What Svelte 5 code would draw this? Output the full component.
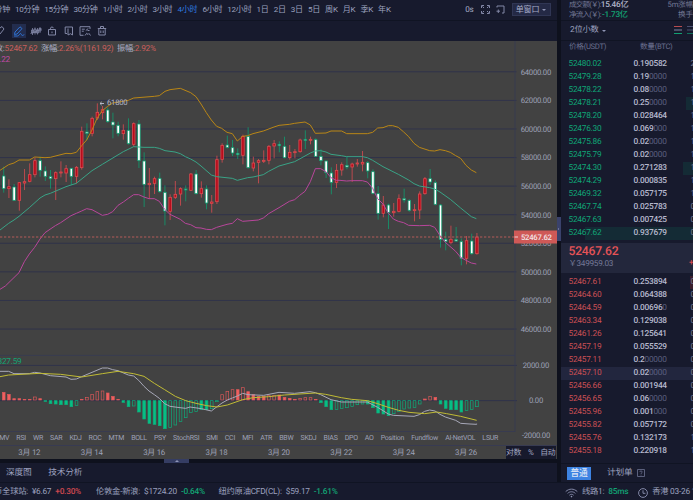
<script>
    const periods = ["10分钟", "15分钟", "30分钟", "1小时", "2小时", "3小时", "4小时", "6小时", "12小时", "1日", "2日", "3日", "5日", "周K", "月K", "季K", "年K"];
    let period = $state("4小时");

    const indicators = ["MV", "RSI", "WR", "SAR", "KDJ", "ROC", "MTM", "BOLL", "PSY", "StochRSI", "SMI", "CCI", "MFI", "ATR", "BBW", "SKDJ", "BIAS", "DPO", "AO", "Position", "Fundflow", "AI-NetVOL", "LSUR"];
    const dates = ["3月 12", "3月 14", "3月 16", "3月 18", "3月 20", "3月 22", "3月 24", "3月 26"];
    const prices = [64000, 62000, 60000, 58000, 56000, 54000, 52000, 50000, 48000, 46000];

    // price, amount, trailing zeros, total, depth bar width
    const bids = [
        ["52480.02", "0.190582", "", "2", 0],
        ["52479.28", "0.19", "0000", "1", 0],
        ["52478.22", "0.08", "0000", "1", 0],
        ["52478.21", "0.25", "0000", "1", 7],
        ["52478.20", "0.028464", "", "1", 0],
        ["52476.30", "0.069", "000", "1", 0],
        ["52475.86", "0.02", "0000", "1", 0],
        ["52475.79", "0.02", "0000", "1", 0],
        ["52474.30", "0.271283", "", "1", 10],
        ["52474.29", "0.000835", "", "1", 0],
        ["52469.32", "0.057175", "", "1", 0],
        ["52467.74", "0.025783", "", "0", 0],
        ["52467.63", "0.007425", "", "0", 0],
        ["52467.62", "0.937679", "", "0", 108],
    ];
    const asks = [
        ["52467.61", "0.253894", "", "0", 3],
        ["52464.60", "0.064388", "", "0", 0],
        ["52464.59", "0.00696", "0", "0", 0],
        ["52463.34", "0.129038", "", "0", 0],
        ["52461.26", "0.125641", "", "0", 0],
        ["52457.19", "0.055529", "", "0", 0],
        ["52457.11", "0.2", "00000", "0", 0],
        ["52457.10", "0.02", "0000", "0", 0],
        ["52456.66", "0.001944", "", "0", 0],
        ["52456.65", "0.06", "0000", "0", 0],
        ["52455.96", "0.001", "000", "0", 0],
        ["52455.82", "0.057172", "", "0", 0],
        ["52455.76", "0.132173", "", "1", 0],
        ["52455.18", "0.220918", "", "1", 0],
    ];

    // all series are in thirds of a pixel; each block has its own origin
    const STEP = 15.6;
    const barX = i => 11.2 + i * STEP;

    // direction, high, body top, body bottom, low
    const candleBlocks = [
        [180, `g 320 347 387 398,r 358 379 387 414,g 372 380 422 422,r 366 367 422 452,r 327 364 370 390,r 310 343 365 367,r 292 301 345 352,g 290 301 332 350,g 319 332 350 363,g 330 349 357 386,r 334 337 357 420,r 304 335 340 352,r 315 325 340 366,g 324 324 350 375,r 318 321 350 370,r 200 213 324 329,g 190 215 221 240,r 170 174 221 229,r 130 156 175 180,r 138 148 159 178,g 142 149 186 188,g 158 185 196 235,g 185 195 221 229,r 193 210 222 239,g 175 210 252 254,r 187 190 254 260,g 180 191 303 324,g 277 302 374 441,r 324 369 375 416,r 350 355 371 402,g 338 354 396 398`],
        [240, `g 316 336 394 436,r 343 351 395 420,r 303 342 353 357,r 322 325 343 377,g 316 326 331 364,r 279 281 332 333,g 270 281 342 343,r 304 325 342 353,g 316 326 370 388,r 345 365 371 398,r 227 238 366 372,r 190 195 239 248,g 167 194 203 205,g 180 202 220 228,g 205 219 225 237,r 164 168 227 253,g 142 168 264 266,r 230 248 265 274,r 237 241 248 310,r 211 240 244 249,r 195 198 242 253,r 180 190 199 235,g 184 192 198 217,g 170 198 234 235,r 195 216 234 239,r 207 214 218 235,r 176 179 216 218,g 151 177 180 207,r 170 177 181 193,g 175 178 230 231,g 208 228 243 256,g 241 242 279 294`],
        [390, `g 112 128 158 193,r 102 120 158 174,r 97 103 121 137,g 80 105 112 118,r 98 101 112 156,r 87 98 102 110,r 63 96 103 124,g 93 97 124 145,g 118 124 191 193,g 168 190 251 269,r 198 224 251 262,g 221 224 248 297,r 219 243 249 260,r 193 205 245 247,g 176 205 211 218,g 208 210 242 245,r 222 238 242 274,r 184 191 241 267,r 141 145 192 194,g 117 145 157 165,g 151 157 224 226,g 222 224 329 353,g 305 327 335 361,r 287 327 339 343,g 291 328 334 336,g 325 334 386 406,r 318 331 386 403,g 311 332 372 374,r 309 320 372 374`],
    ];
    const candles = candleBlocks.flatMap(([dy, text]) =>
        text.split(",").map(row => {
            const [dir, ...v] = row.split(" ");
            const [high, top, bottom, low] = v.map(n => +n + dy);
            return { dir, high, top, bottom, low };
        })
    );

    const line = blocks => blocks.map(([dx, dy, text]) =>
        text.split(" ").map(p => {
            const [x, y] = p.split(",").map(Number);
            return `${x + dx},${y + dy}`;
        }).join(" ")
    ).join(" ");

    const upper = line([
        [0, 180, "0,331 26,314 42,309 57,300 88,300 104,291 135,293 151,292 198,280 213,281 229,277 245,257 260,240 276,210 291,175 307,152 323,139 338,129 385,121 401,114 463,109 478,107"],
        [480, 240, "15,34 30,29 61,25 92,38 108,50 123,72 139,98 154,120 170,139 185,145 201,157 217,161 232,183 248,169 263,167 279,161 310,153 342,141 357,136 388,133 404,130 435,126 451,135 466,160 498,159 513,153"],
        [990, 390, "35,3 50,11 112,11 128,7 143,-6 159,-7 175,-13 188,-13 205,-8 220,5 236,20 252,40 268,52 299,62 314,63 330,59 346,62 361,67 377,77 392,85 408,106 424,120 439,128"],
    ]);
    const middle = line([
        [0, 180, "0,510 26,490 42,480 57,469 88,443 120,414 135,405 151,400 198,380 229,370 276,332 307,313 370,275 401,260 432,262 463,262 478,265"],
        [480, 240, "15,212 45,216 61,221 76,230 92,237 108,246 123,258 154,285 170,290 217,295 232,301 263,293 279,291 310,284 326,274 357,258 404,245 435,228 451,219 466,213 482,212 498,216 513,223"],
        [990, 390, "34,77 50,80 97,80 112,83 128,91 159,110 205,133 236,150 252,161 268,168 299,173 314,177 330,186 361,208 392,234 424,260 439,266"],
    ]);
    const lower = line([
        [0, 180, "0,688 16,678 57,638 73,605 88,582 104,562 120,537 135,518 166,497 182,488 213,467 229,460 245,453 260,446 276,449 307,466 323,463 338,455 354,436 370,426 385,415 401,404 416,404 432,411 447,416 463,416 478,424"],
        [480, 240, "14,388 30,403 61,418 76,430 92,434 108,443 123,444 139,448 154,449 170,442 201,433 217,430 232,416 248,424 295,420 310,414 326,401 357,383 388,364 404,359 419,346 435,334 451,305 466,266 482,266 498,275 513,293 529,301"],
        [990, 390, "30,151 50,153 65,152 97,152 112,156 128,175 143,206 159,222 174,248 190,267 205,274 221,278 236,286 268,287 299,286 314,292 330,317 346,337 377,364 392,382 408,391 424,399 439,402"],
    ]);
    const dif = line([
        [0, 1035, "0,79 26,79 42,86 88,86 104,82 120,84 151,92 198,96 213,103 229,102 245,95 276,82 307,69 323,69 338,74 354,77 385,90 401,93 416,106 432,124 447,138 463,149 478,160 494,176 510,184 540,188 557,190 570,186 604,191 617,194 634,198 651,185 666,174 682,165 697,159"],
        [690, 1035, "22,153 38,145 54,149 101,151 147,142 194,145 240,140 256,143 272,149 303,164 334,171 412,171 443,187 475,207 490,211 552,214 568,209 584,199 599,195 615,198 630,208 646,216 677,226 692,235 720,237 740,238 740,236"],
    ]);
    const dea = line([
        [0, 1035, "0,95 26,90 120,85 182,88 245,96 307,86 354,79 401,86 432,94 463,115 494,134 526,154 557,167 588,175 620,182 651,186 682,180"],
        [690, 1035, "38,164 70,158 116,155 163,150 225,146 256,144 287,148 334,158 365,163 412,167 443,176 475,187 506,196 537,202 584,206 620,201 650,206 692,214 720,221 740,226"],
    ]);

    // histogram ends, "h" marks a hollow bar
    const ZERO = 166;
    const bars = "141 147 160 160 162 162 155h 160 169 177 178 180 180 186 182h 162 156h 147h 139h 137h 143 153 162 173 186 184h 202 223 236 239 243 252 248h 241h 230h 219h 203h 200h 195 195 192h 171h 148h 138h 133h 133 127h 139 148 153 153 151h 150h 149 156 159 162 159h 157h 157h 162 174 186 195 194h 191h 189h 185h 180h 178h 178 189 205 208 213 207h 200h 193h 190h 188h 178h 161 153h 156 178 191 195 195 202 197h 194h 186h"
        .split(" ")
        .map(s => ({ end: parseInt(s), hollow: s.endsWith("h") }));
</script>

{#snippet row(r, side, active)}
    <div class="row {side}" class:active>
        <i class="depth" style="width: {r[4]}px"></i>
        <span class="price">{r[0]}</span>
        <span class="amount">{r[1]}<em>{r[2]}</em></span>
        <span class="total">{r[3]}</span>
    </div>
{/snippet}

<div class="app">
    <div class="left">
        <nav class="periods">
            <span class="cut">5分钟</span>
            {#each periods as p}
                <button class:on={p === period} onclick={() => { period = p }}>{p}</button>
            {/each}
            <div class="window">
                <span>0s</span>
                <svg width="9" height="9" viewBox="0 0 9 9"><path d="M.5 3V.5H3M6 .5h2.500V3M8.500 6v2.500H6M3 8.500H.5V6M1.500 1.500 3 3M7.500 1.500 6 3M1.500 7.500 3 6M7.500 7.500 6 6" /></svg>
                <svg width="9" height="9" viewBox="0 0 9 9"><path d="M1 2.500V1h7v7H6M.5 6.200h3.500M2.300 4.500v3.500" /></svg>
                <button class="single">单窗口 <i class="caret"></i></button>
            </div>
        </nav>

        <div class="tools">
            <svg class="pen" width="6" height="12" viewBox="0 0 6 12"><path d="M0 3 2 1.500 4 4 0 9" /></svg>
            <span class="tool on">
                <svg width="12" height="12" viewBox="0 0 12 12"><path d="M1.500 9.500 2 7l5-5.200 2 1.800-5 5.400zM1 11h3.500c1.500 0 2-2.500 3-2.500s.8 2 1.800 2 1-.8 2-.8" /></svg>
            </span>
            <svg class="strike" width="12" height="12" viewBox="0 0 12 12"><path d="M2.500 3v7M5 2.500v7M7.500 3v6.500M10 2v6M1.500 5h2v3h-2zM4 4h2v3.500H4zM6.500 5h2v3h-2zM9 3.500h2V6H9zM.5 8.500 11.500 4" /></svg>
            <svg class="lock" width="10" height="12" viewBox="0 0 10 12"><path d="M1.500 4.500h7v5.500h-7zM3.500 4.500V3.200c0-1.600 2.800-1.600 3 0M5 6.500v1.700" /></svg>
            <svg class="copy" width="10" height="12" viewBox="0 0 10 12"><path d="M3 2h5.500v8l-2-1.300L4 10V3.500M3 2H1.200v6.500H3" /></svg>
            <svg class="picture" width="12" height="12" viewBox="0 0 12 12"><path d="M11 4V1.700H1v8.600h3.500M2.800 4.200h3M2.800 6.200h2M6 10.500l1.700-2.200 1.300 1.200 1-1 1.500 2M6.800 5.500l2.500-2M8.500 5.500h2" /></svg>
            <svg class="trash" width="10" height="12" viewBox="0 0 10 12"><path d="M.8 3.500h8.400M3.500 3.500v-2h3v2M1.800 3.500V10h6.400V3.500M3.800 5.500v2.500M6.200 5.500v2.500" /></svg>
        </div>

        <div class="chart">
            <svg class="plot" width="557" height="391" viewBox="0 41 557 391">
                {#each prices as p, i}
                    <path class="grid" d="M0 {71.8 + i * 28.58}H516.500" />
                    <text class="axis" x="551" y={74.6 + i * 28.58}>{p}.00</text>
                {/each}
                <path class="grid faint" d="M0 355.400H515M0 431.500H515" />
                <path class="grid" d="M0 365.400H517M0 400.600H517" />
                <path class="grid faint" d="M515 41V432" />
                <text class="axis" x="549" y="368.200">2000.00</text>
                <text class="axis" x="543" y="403.200">0.00</text>

                <g transform="scale({1 / 3})">
                    {#each candles as c, i}
                        <g class={c.dir}>
                            <path class="wick" d="M{barX(i)} {c.high}V{c.low}" />
                            <rect x={barX(i) - 3.8} y={c.top + 1} width="7.600" height={Math.max(c.bottom - c.top - 2, 3)} />
                        </g>
                    {/each}
                    {#each bars as b, i}
                        <rect
                            class="bar"
                            class:up={b.end < ZERO}
                            class:hollow={b.hollow}
                            x={barX(i) - 4}
                            y={1035 + Math.min(b.end, ZERO) + 1}
                            width="8"
                            height={Math.max(Math.abs(b.end - ZERO) - 2, 2)}
                        />
                    {/each}
                    <polyline class="upper" points={upper} />
                    <polyline class="middle" points={middle} />
                    <polyline class="lower" points={lower} />
                    <polyline class="dif" points={dif} />
                    <polyline class="dea" points={dea} />
                </g>

                <path class="arrow" d="M104 103.500h-4m1.700-1.600L100 103.500l1.700 1.600" />
                <text class="peak" x="107" y="105.400">61800</text>

                <path class="now" d="M0 237H514" />
                <rect class="tag" x="514" y="230.500" width="43" height="13" />
                <path class="tick" d="M514.500 237h3.500" />
                <text class="tag-text" x="521" y="239.900">52467.62</text>

                <text class="info" x="4.600" y="50.500" text-anchor="end">收:</text>
                <text class="info hot" x="4.600" y="50.500">52467.62</text>
                <text class="info" x="41" y="50.500">涨幅:<tspan class="hot">2.26%(1161.92)</tspan></text>
                <text class="info" x="117" y="50.500">振幅:<tspan class="hot">2.92%</tspan></text>
                <text class="info pink" x="10" y="62" text-anchor="end">51037.22</text>
                <text class="info mint" x="21.500" y="364.200" text-anchor="end">-827.59</text>
            </svg>
            <div class="indicators">
                {#each indicators as name}
                    <span>{name}</span>
                {/each}
                <b>-2000.00</b>
            </div>
            <div class="dates">
                {#each dates as d}
                    <span>{d}</span>
                {/each}
                <div class="scale"><span>对数</span><span>%</span><span>自动</span></div>
            </div>
        </div>

        <div class="splitter"><i></i></div>
        <div class="tabs"><span>深度图</span><span>技术分析</span></div>
    </div>

    <div class="gutter"><i></i></div>

    <div class="right">
        <div class="stats">
            <div><span>成交额(￥):</span><b>15.46亿</b><u>5m涨幅</u></div>
            <div><span>净流入(￥):</span><b class="mint">-1.73亿</b><u class="turn">换手</u></div>
        </div>
        <div class="precision">
            <span>2位小数</span><i class="caret"></i>
            <svg width="19" height="10" viewBox="0 0 19 10">
                <path stroke="#b64c50" d="M0 1.500h8" /><path stroke="#8085a3" d="M0 5h8" /><path stroke="#10a071" d="M0 8.500h8" />
                <path stroke="#4a5070" d="M13 1.500h8M13 5h8" /><path stroke="#10705b" d="M13 8.500h8" />
            </svg>
        </div>
        <div class="head"><span>价格(USDT)</span><span>数量(BTC)</span></div>
        <div class="book bids">
            {#each bids as r}
                {@render row(r, "bid", false)}
            {/each}
        </div>
        <div class="last">
            <strong>52467.62</strong>
            <small>￥349959.03</small>
            <b>+</b>
        </div>
        <div class="book asks">
            {#each asks as r, i}
                {@render row(r, "ask", i === 7)}
            {/each}
        </div>
        <div class="orders">
            <button>普通</button><span>计划单</span>
            <svg width="8" height="8" viewBox="0 0 8 8"><path d="M.5.5h7v7h-7zM2.800 3c0-1.500 2.400-1.500 2.400 0C5.200 4 4 3.800 4 5M4 5.700v.8" /></svg>
        </div>
    </div>

    <footer>
        <div class="quote q1"><span>币全球站:</span><span>¥6.67</span><b class="red">+0.30%</b></div>
        <div class="quote q2"><span>伦敦金-新浪:</span><span>$1724.20</span><b class="mint">-0.64%</b></div>
        <div class="quote q3"><span>纽约原油CFD(CL):</span><span>$59.17</span><b class="mint">-1.61%</b></div>
        <div class="net">
            <svg width="13" height="10" viewBox="0 0 13 10"><path d="M.7 3.600c3.300-3.300 8.300-3.300 11.600 0M2.600 5.400c2.200-2.200 5.600-2.200 7.800 0M4.400 7.200c1.200-1.200 3-1.200 4.200 0" /><circle cx="6.500" cy="8.600" r=".8" /></svg>
            <span>线路1:</span><b class="mint">85ms</b>
            <svg class="clock" width="10" height="10" viewBox="0 0 10 10"><circle class="ring" cx="5" cy="5" r="4.400" /><path d="M5 2.300V5.300h2.400" /></svg>
            <span>香港 03-26 15:32</span>
        </div>
    </footer>
</div>

<style>
    :global(body) {
        background: #0e111d;
    }

    .app {
        display: grid;
        grid-template-columns: 557px 4px 132px;
        grid-template-rows: 482px 18px;
        width: 693px;
        height: 500px;
        overflow: hidden;
        font: 8.3px/1 Roboto, "Noto Sans CJK SC", sans-serif;
        letter-spacing: -.25px;
        text-rendering: geometricPrecision;
        color: #9ca1bf;
        white-space: nowrap;
        cursor: default;
    }

    button {
        border: none;
        background: none;
        margin: 0;
        padding: 0;
        font: inherit;
        letter-spacing: inherit;
        color: inherit;
    }

    b {
        font-weight: 500;
    }

    svg {
        display: block;
        flex: none;
        fill: none;
        stroke: #8287a6;
        stroke-width: 1;
    }

    text {
        stroke: none;
    }

    .red {
        color: #d0484f;
    }

    .mint {
        color: #12a374;
        fill: #12a374;
    }

    .caret {
        display: inline-block;
        border: 2px solid transparent;
        border-top-color: #9095b5;
        border-bottom: none;
    }

    .left {
        display: flex;
        flex-direction: column;
        min-width: 0;
        overflow: hidden;
    }

    .periods {
        box-sizing: border-box;
        display: flex;
        align-items: center;
        gap: 5.1px;
        height: 21px;
        padding-bottom: 1px;
        border-bottom: 1px solid #101423;
        background: #171a2d;
        font-size: 8.100px;
        letter-spacing: -.3px;

        .cut {
            width: 10px;
            display: flex;
            justify-content: flex-end;
        }

        .on {
            color: #2f7be0;
        }
    }

    .window {
        display: flex;
        align-items: center;
        margin-left: auto;
        padding-right: 6.500px;

        span {
            color: #a9adc6;
            margin-right: 7px;
        }

        svg {
            margin-right: 6.500px;
        }
    }

    .single {
        display: flex;
        align-items: center;
        justify-content: center;
        gap: 3px;
        box-sizing: border-box;
        width: 39px;
        height: 13px;
        border: 1px solid #303654;
        background: #242945;
        color: #a4a9c6;
    }

    .tools {
        display: flex;
        align-items: center;
        height: 20px;
        background: #171a2d;
    }

    .tool {
        display: flex;
        align-items: center;
        justify-content: center;
        width: 14px;
        height: 14px;
        margin-left: 6px;
        background: #232d4e;

        svg {
            stroke: #2f72d2;
        }
    }

    .strike {
        margin-left: 4px;
        stroke-width: .8;
    }

    .lock {
        margin-left: 5px;
    }

    .copy {
        margin-left: 7px;
    }

    .picture {
        margin-left: 5px;
    }

    .trash {
        margin-left: 6px;
    }

    .chart {
        height: 418px;
        background: #424242;
    }

    .grid {
        stroke: #30334a;
    }

    .faint {
        stroke: #363a54;
        stroke-width: .8;
    }

    .axis {
        fill: #9ea1b7;
        font-size: 7.700px;
        text-anchor: end;
    }

    .peak {
        fill: #b3b5c6;
        font-size: 7.700px;
    }

    .arrow {
        stroke: #c0c2d2;
        stroke-width: .9;
    }

    .info {
        fill: #b0b3c8;
        font-size: 8.300px;

        &.hot, .hot {
            fill: #c95f5d;
        }

        &.pink {
            fill: #bf4aa4;
        }

        &.mint {
            fill: #12a374;
        }
    }

    .now {
        stroke: #b35b58;
        stroke-width: 1.200;
        stroke-dasharray: 2.300 1.700;
    }

    .tag {
        fill: #cf5957;
        stroke: none;
    }

    .tick {
        stroke: #ecd0d3;
    }

    .tag-text {
        fill: #f3e6e8;
        font-size: 7.700px;
        font-weight: 500;
    }

    .r {
        stroke: #d94b50;
        fill: #b80c1c;
    }

    .g {
        stroke: #0f9d70;
        fill: #fff;
    }

    .r > *, .g > * {
        stroke-width: 2.400;
    }

    .bar {
        fill: #06bf85;
        stroke: #0cae7b;
        stroke-width: 2;

        &.up {
            fill: #f06060;
            stroke: #dc5859;
        }

        &.hollow {
            fill: none;
        }
    }

    polyline {
        stroke-width: 3;
        stroke-linejoin: round;
    }

    .upper {
        stroke: #b98616;
    }

    .middle {
        stroke: #39a386;
    }

    .lower {
        stroke: #b8469b;
    }

    .dif {
        stroke: #a7a8b8;
    }

    .dea {
        stroke: #c0bb35;
    }

    .indicators {
        display: flex;
        align-items: center;
        gap: 7.050px;
        height: 13px;
        margin-left: -.8px;
        font-size: 7px;
        color: #9ea1b7;

        b {
            margin: -6px 0 0 auto;
            padding-right: 7px;
            font-size: 7.700px;
            font-weight: 400;
        }
    }

    .dates {
        box-sizing: border-box;
        display: flex;
        align-items: center;
        height: 14px;
        border-top: 1px solid #383b52;
        font-size: 7.900px;
        color: #9ea1b7;

        > span {
            flex: none;
            width: 62.400px;
            text-align: center;
        }

        > span:first-child {
            margin-left: -1.900px;
        }
    }

    .scale {
        box-sizing: border-box;
        display: flex;
        align-items: center;
        justify-content: space-between;
        width: 50px;
        height: 13px;
        margin-left: 8.700px;
        padding-right: .5px;
        background: #17192c;
        color: #a4a8c1;
    }

    .splitter {
        display: flex;
        height: 4px;
        background: #0e111d;

        i {
            display: flex;
            justify-content: center;
            align-items: center;
            width: 25px;
            margin-left: 164px;
            background: #353d63;
        }

        i::after {
            content: "";
            border: 2px solid transparent;
            border-bottom-color: #8f95b8;
            border-top: none;
        }
    }

    .tabs {
        box-sizing: border-box;
        display: flex;
        align-items: center;
        gap: 17px;
        height: 19px;
        padding: 2px 0 0 6px;
        background: #171a2d;
        font-size: 8.700px;
    }

    .gutter {
        background: #0e111d;

        i {
            display: flex;
            align-items: center;
            height: 24px;
            margin-top: 217px;
            background: #3a426c;
        }

        i::after {
            content: "";
            margin-left: 1px;
            border: 1.500px solid transparent;
            border-left-color: #9ba0c0;
            border-right: none;
        }
    }

    .right {
        display: flex;
        flex-direction: column;
        min-width: 0;
        overflow: hidden;
        background: #171a2d;
    }

    .stats {
        box-sizing: border-box;
        height: 21px;
        border-bottom: 1px solid #101423;

        div {
            display: flex;
            align-items: center;
            height: 10px;
            padding-left: 8px;
            color: #737896;
            font-size: 7.700px;
        }

        span {
            width: 33.500px;
            font-size: 7.500px;
            letter-spacing: -.75px;
        }

        b {
            width: 72.500px;
            font-size: 8.200px;
            color: #b3b6cc;
        }

        .mint {
            color: #12a374;
        }

        u {
            text-decoration: none;
        }

        .turn {
            padding-left: 4.500px;
        }
    }

    .precision {
        box-sizing: border-box;
        display: flex;
        align-items: center;
        height: 20px;
        padding-left: 9px;
        border-bottom: 1px solid #101423;

        .caret {
            margin: 1px 0 0 3px;
        }

        svg {
            margin: -2px 0 0 auto;
        }
    }

    .head {
        display: flex;
        height: 16.500px;
        padding: 1.500px 0 0 8px;
        box-sizing: border-box;
        font-size: 7.700px;
        letter-spacing: -.35px;
        color: #6a6f8e;

        span:first-child {
            width: 71px;
        }
    }

    .row {
        position: relative;
        display: flex;
        align-items: center;
        height: 13px;
        padding-left: 7.500px;

        &.active {
            background: #22263e;
        }
    }

    .depth {
        position: absolute;
        top: 0;
        right: 0;
        height: 100%;
    }

    .bid {
        .price {
            color: #10a476;
        }

        .depth {
            background: #142b35;
        }
    }

    .ask {
        .price {
            color: #c94f54;
        }

        .depth {
            background: #3a1f2e;
        }
    }

    .price, .amount, .total {
        position: relative;
        flex: none;
    }

    .price {
        width: 65px;
    }

    .amount {
        width: 57px;
        color: #b6b9cd;
        font-weight: 500;

        em {
            font-style: normal;
            font-weight: 400;
            color: #5a5f7e;
        }
    }

    .total {
        color: #70758f;
    }

    .last {
        position: relative;
        display: flex;
        flex-direction: column;
        box-sizing: border-box;
        height: 29.500px;
        margin-top: 3.500px;
        padding: 2px 0 0 7.500px;
        background: #23273c;

        strong {
            font-size: 12.200px;
            font-weight: 500;
            color: #e65357;
        }

        small {
            margin-top: 3px;
            font-size: 8.200px;
            color: #747997;
        }

        b {
            position: absolute;
            left: 128px;
            top: 16px;
            color: #d0484f;
        }
    }

    .asks {
        padding-top: 3.500px;
    }

    .orders {
        box-sizing: border-box;
        display: flex;
        align-items: center;
        margin-top: auto;
        height: 19px;
        padding-left: 6px;
        border-top: 1px solid #101423;
        font-size: 8.700px;

        button {
            width: 24px;
            height: 13px;
            background: #3d83e2;
            color: #dfe6f6;
            font-weight: 500;
        }

        span {
            margin: 0 4.500px 0 16px;
        }

        svg {
            stroke: #6d7291;
            stroke-width: .8;
        }
    }

    footer {
        grid-column: 1 / -1;
        box-sizing: border-box;
        display: flex;
        align-items: center;
        padding-top: 2px;
        border-top: 1px solid #101423;
        background: #171a2d;
    }

    .quote {
        flex: none;
        display: flex;
        gap: 4px;
    }

    .q1 {
        width: 96px;

        span:first-child {
            display: flex;
            justify-content: flex-end;
            width: 28px;
        }
    }

    .q2 {
        width: 122.500px;
    }

    .net {
        display: flex;
        align-items: center;
        margin-left: auto;
        width: 128px;
        gap: 4px;

        circle {
            fill: #9095b5;
            stroke: none;
        }

        .ring {
            fill: none;
            stroke: #8287a6;
        }

        .clock {
            margin-left: 6px;
        }
    }
</style>
